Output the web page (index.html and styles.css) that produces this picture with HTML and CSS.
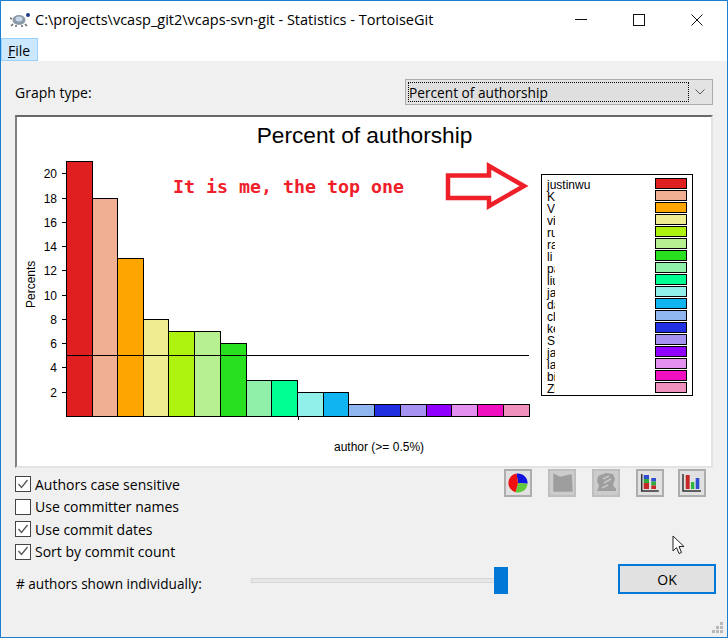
FILE: index.html
```html
<!DOCTYPE html>
<html lang="en">
<head>
    <meta charset="UTF-8" />
    <title>Statistics - TortoiseGit</title>
    <link rel="stylesheet" href="styles.css">
</head>
<body>
<div class="window">
    <div class="titlebar">
        <svg class="app-icon" width="22" height="16" viewBox="0 0 22 16">
            <ellipse cx="9" cy="8" rx="6.5" ry="5" fill="#8c9aa8"/>
            <ellipse cx="9" cy="7" rx="3.5" ry="2.5" fill="#c8d8ea"/>
            <path d="M3 12l-2 2M6 13v2M12 13v2M15 12l2 2M2 7l-2-1" stroke="#666" stroke-width="1.5"/>
            <circle cx="18" cy="3" r="2" fill="#1c3f8a"/>
        </svg>
        <span class="title">C:\projects\vcasp_git2\vcaps-svn-git - Statistics - TortoiseGit</span>
        <div class="caption">
            <svg width="14" height="14" viewBox="0 0 14 14"><path d="M1 6.500h12" stroke="#111"/></svg>
            <svg width="14" height="14" viewBox="0 0 14 14"><rect x="1.5" y="1.5" width="11" height="11" fill="none" stroke="#111"/></svg>
            <svg width="14" height="14" viewBox="0 0 14 14"><path d="M1.5 1.5l11 11M12.5 1.5l-11 11" stroke="#111"/></svg>
        </div>
    </div>
    <div class="menubar"><span class="menu-item"><u>F</u>ile</span></div>

    <div class="content">
        <div class="type-row">
            <span>Graph type:</span>
            <div class="combo">
                <div class="combo-value"><span>Percent of authorship</span></div>
                <svg class="combo-arrow" width="10" height="6" viewBox="0 0 10 6"><path d="M0.5 0.5l4.5 4.5 4.5-4.5" fill="none" stroke="#555"/></svg>
            </div>
        </div>

        <div class="graph">
            <svg width="694" height="349" viewBox="17 117 694 349">
                <defs>
                    <clipPath id="legendClip"><rect x="544" y="176" width="11" height="218"/></clipPath>
                </defs>
                <text class="chart-title" x="364.500" y="143" text-anchor="middle">Percent of authorship</text>
                <text class="note" x="173" y="193">It is me, the top one</text>
                <polygon class="arrow" points="448,175.500 489,175.500 489,166 524,186 489,206 489,198 448,198"/>

                <g id="bars"></g>
                <path d="M66 355.500H529" stroke="#000" fill="none"/>
                <path id="ticks" stroke="#000" fill="none"/>
                <g id="yLabels"></g>
                <text class="axis" transform="translate(35,308) rotate(-90)">Percents</text>
                <text class="axis" x="334" y="451">author (&gt;= 0.5%)</text>

                <rect x="541.500" y="174.500" width="151" height="221" fill="#fff" stroke="#000"/>
                <g id="legend"></g>
                <text class="axis" x="547" y="189">justinwu</text>
                <g id="legendNames" clip-path="url(#legendClip)"></g>
            </svg>
        </div>

        <div class="options-row">
            <div class="checks">
                <label class="check"><span class="box"><svg width="14" height="14" viewBox="0 0 14 14"><path d="M2.500 7l3 3.500 6-7.500" fill="none" stroke="#555" stroke-width="1.300"/></svg></span>Authors case sensitive</label>
                <label class="check"><span class="box"></span>Use committer names</label>
                <label class="check"><span class="box"><svg width="14" height="14" viewBox="0 0 14 14"><path d="M2.500 7l3 3.500 6-7.500" fill="none" stroke="#555" stroke-width="1.300"/></svg></span>Use commit dates</label>
                <label class="check"><span class="box"><svg width="14" height="14" viewBox="0 0 14 14"><path d="M2.500 7l3 3.500 6-7.500" fill="none" stroke="#555" stroke-width="1.300"/></svg></span>Sort by commit count</label>
            </div>
            <div class="tools">
                <div class="tool">
                    <svg width="24" height="24" viewBox="0 0 24 24">
                        <path d="M12 12L10.500 2.600A9.500 9.500 0 0 1 21.500 12.800Z" fill="#1212e0"/>
                        <path d="M12 12L21.500 12.800A9.500 9.500 0 0 1 9.500 21.200Z" fill="#62c83c"/>
                        <path d="M12 12L9.500 21.200A9.500 9.500 0 0 1 10.500 2.600Z" fill="#ee1010"/>
                    </svg>
                </div>
                <div class="tool off">
                    <svg width="24" height="24" viewBox="0 0 24 24"><polygon points="3.300,2.300 10,5.700 21.700,3 22.700,20.700 3.300,20.700" fill="#9e9e9e"/></svg>
                </div>
                <div class="tool off">
                    <svg width="24" height="24" viewBox="0 0 24 24">
                        <path d="M4 5l8-3 7 1 2 5-2 6 3 4v2H3l2-5-2-5z" fill="#9e9e9e"/>
                        <path d="M9 8l6-3M10 12l7-4M8 17l6-3" stroke="#c6c6c6" stroke-width="1.500" fill="none"/>
                    </svg>
                </div>
                <div class="tool">
                    <svg width="24" height="24" viewBox="0 0 24 24">
                        <rect x="5.700" y="4" width="5.300" height="4" fill="#2f4fd0"/>
                        <rect x="5.700" y="8" width="5.300" height="4" fill="#2fa83c"/>
                        <rect x="5.700" y="12" width="5.300" height="6" fill="#c62828"/>
                        <rect x="13.300" y="7" width="4.700" height="3.500" fill="#2f4fd0"/>
                        <rect x="13.300" y="10.500" width="4.700" height="4" fill="#2fa83c"/>
                        <rect x="13.300" y="14.500" width="4.700" height="3.500" fill="#c62828"/>
                        <path d="M3.700 3v17h17" fill="none" stroke="#333" stroke-width="1.500"/>
                    </svg>
                </div>
                <div class="tool last">
                    <svg width="24" height="24" viewBox="0 0 24 24">
                        <rect x="5.700" y="4" width="4" height="14" fill="#c62828"/>
                        <rect x="11" y="11" width="3.300" height="7" fill="#2fb83c"/>
                        <rect x="15.700" y="7" width="3.600" height="11" fill="#2f4fd0"/>
                        <path d="M3 3v17h18" fill="none" stroke="#333" stroke-width="1.500"/>
                    </svg>
                </div>
            </div>
        </div>

        <div class="bottom-row">
            <span class="count-label"># authors shown individually:</span>
            <div class="slider"><span class="thumb"></span></div>
            <button class="ok">OK</button>
        </div>
    </div>

    <svg class="cursor" width="14" height="20" viewBox="0 0 14 20"><path d="M1 1v15l3.500-3.500 2.500 6 2.500-1-2.500-6h5z" fill="#fff" stroke="#222"/></svg>
    <svg class="grip" width="12" height="12" viewBox="0 0 12 12" fill="#b8b8b8">
        <rect x="8" y="0" width="3" height="3"/><rect x="4" y="4" width="3" height="3"/><rect x="8" y="4" width="3" height="3"/>
        <rect x="0" y="8" width="3" height="3"/><rect x="4" y="8" width="3" height="3"/><rect x="8" y="8" width="3" height="3"/>
    </svg>
</div>

<script>
    const NS = "http://www.w3.org/2000/svg";
    const colors = ["#e02020", "#f0ae92", "#ffa500", "#f0ec92", "#aef20f", "#b6f090", "#28e020",
        "#90f0aa", "#00ff92", "#92f0ea", "#10b4f0", "#90b6f0", "#2030e0", "#a692f0", "#9000ff",
        "#e490f0", "#f010c0", "#f090bc"];
    const values = [21, 18, 13, 8, 7, 7, 6, 3, 3, 2, 2, 1, 1, 1, 1, 1, 1, 1];
    const edges = [66, 92, 117, 143, 168, 194, 220, 246, 271, 297, 323, 348, 374, 400, 426, 451, 477, 503, 529];
    const names = ["", "Ke", "Vi", "vic", "ru", "ra", "li", "pa", "liu", "ja", "da", "cl", "ke", "Sa", "ja", "la", "bi", "Zh"];

    function add(parent, tag, attrs, text) {
        const el = document.createElementNS(NS, tag);
        for (const [k, v] of Object.entries(attrs)) {
            el.setAttribute(k, v);
        }
        if (text) el.textContent = text;
        document.getElementById(parent).appendChild(el);
    }

    values.forEach((v, i) => {
        const x = edges[i] + 0.5;
        const top = Math.round(416 - v * 12.13) + 0.5;
        add("bars", "rect", { x: x, y: top, width: edges[i + 1] - edges[i], height: 416.5 - top, fill: colors[i], stroke: "#000" });

        const y = 178.5 + i * 12;
        add("legend", "rect", { x: 655.5, y: y, width: 31, height: 10, fill: colors[i], stroke: "#000" });
        if (names[i]) add("legendNames", "text", { class: "axis", x: 547, y: y + 10.5 }, names[i]);
    });

    let ticks = "M298.500 416v4";
    for (let n = 2; n <= 20; n += 2) {
        const y = Math.round(416 - n * 12.13) + 0.5;
        ticks += " M62 " + y + "H66";
        add("yLabels", "text", { class: "axis", x: 57, y: y + 4.5, "text-anchor": "end" }, String(n));
    }
    document.getElementById("ticks").setAttribute("d", ticks);
</script>
</body>
</html>
```

FILE: styles.css
```css
* {
    box-sizing: border-box;
}
body {
    margin: 0;
    font-family: "Open Sans", "Noto Sans", sans-serif;
    font-size: 14px;
    color: #000;
    background-color: #f0f0f0;
}
.window {
    position: relative;
    width: 728px;
    height: 638px;
    border: 1px solid #1a7fd0;
    display: flex;
    flex-direction: column;
    overflow: hidden;
}
.titlebar {
    height: 37px;
    background-color: #fff;
    display: flex;
    align-items: center;
    padding-left: 9px;
}
.app-icon {
    margin-right: 3px;
}
.title {
    flex: 1;
    font-size: 14.500px;
    white-space: nowrap;
}
.caption {
    display: flex;
    gap: 44px;
    margin-right: 23px;
}
.menubar {
    height: 23px;
    background-color: #fff;
}
.menu-item {
    display: block;
    width: 37px;
    height: 23px;
    line-height: 23px;
    padding-left: 6px;
    background-color: #cce8ff;
    border: 1px solid #99d1ff;
}
.content {
    flex: 1;
    padding: 18px 11px 0 14px;
}
.type-row {
    display: flex;
    justify-content: space-between;
    align-items: center;
    height: 26px;
    margin-right: 3px;
}
.combo {
    width: 308px;
    height: 26px;
    background-color: #e3e3e3;
    border: 1px solid #adadad;
    display: flex;
    align-items: center;
    justify-content: space-between;
    padding: 2px 7px 2px 2px;
}
.combo-value {
    width: 281px;
    height: 20px;
    line-height: 20px;
    font-size: 13.700px;
    background-color: #dfdfdf;
    border: 1px dotted #000;
    white-space: nowrap;
}
.graph {
    margin: 10px 3px 0 0;
    height: 353px;
    background-color: #fff;
    border-top: 2px solid #696969;
    border-left: 2px solid #808080;
    border-right: 2px solid #e3e3e3;
    border-bottom: 2px solid #e3e3e3;
}
.graph svg {
    display: block;
}
.chart-title {
    font-family: "Liberation Sans", sans-serif;
    font-size: 22.700px;
}
.note {
    font-family: "DejaVu Sans Mono", monospace;
    font-size: 18.300px;
    font-weight: bold;
    fill: #f0202a;
}
.arrow {
    fill: #fff;
    stroke: #f0202a;
    stroke-width: 4.500px;
}
.axis {
    font-family: "Liberation Sans", sans-serif;
    font-size: 12px;
}
.options-row {
    display: flex;
    justify-content: space-between;
    height: 96px;
    margin-right: 10px;
}
.checks {
    padding-top: 5px;
}
.check {
    display: flex;
    align-items: center;
    height: 22.500px;
    white-space: nowrap;
}
.box {
    width: 16px;
    height: 16px;
    margin-right: 4px;
    border: 1.500px solid #444;
    background-color: #fff;
    display: flex;
}
.box svg {
    margin: -0.500px;
}
.tools {
    display: flex;
    gap: 16px;
    padding-top: 1px;
}
.tool {
    width: 28px;
    height: 28px;
    border: 2px solid #adadad;
    background-color: #e1e1e1;
}
.tool svg {
    display: block;
}
.tool.off {
    background-color: #cccccc;
    border-color: #bfbfbf;
}
.tool.last {
    margin-left: -2px;
}
.bottom-row {
    display: flex;
    align-items: center;
    height: 30px;
}
.count-label {
    width: 236px;
    padding-left: 1px;
    font-size: 13.600px;
    white-space: nowrap;
    padding-top: 8px;
}
.slider {
    position: relative;
    width: 258px;
    height: 5px;
    margin-top: 3px;
    background-color: #e7e7e7;
    border: 1px solid #d6d6d6;
}
.thumb {
    position: absolute;
    right: -1px;
    top: -12px;
    width: 14px;
    height: 27px;
    background-color: #0078d7;
}
.ok {
    margin-left: 110px;
    width: 98px;
    height: 30px;
    font: inherit;
    background-color: #e1e1e1;
    border: 2.500px solid #0078d7;
    padding: 0;
}
.cursor {
    position: absolute;
    left: 671px;
    top: 534px;
}
.grip {
    position: absolute;
    right: 3px;
    bottom: 3px;
}
```
